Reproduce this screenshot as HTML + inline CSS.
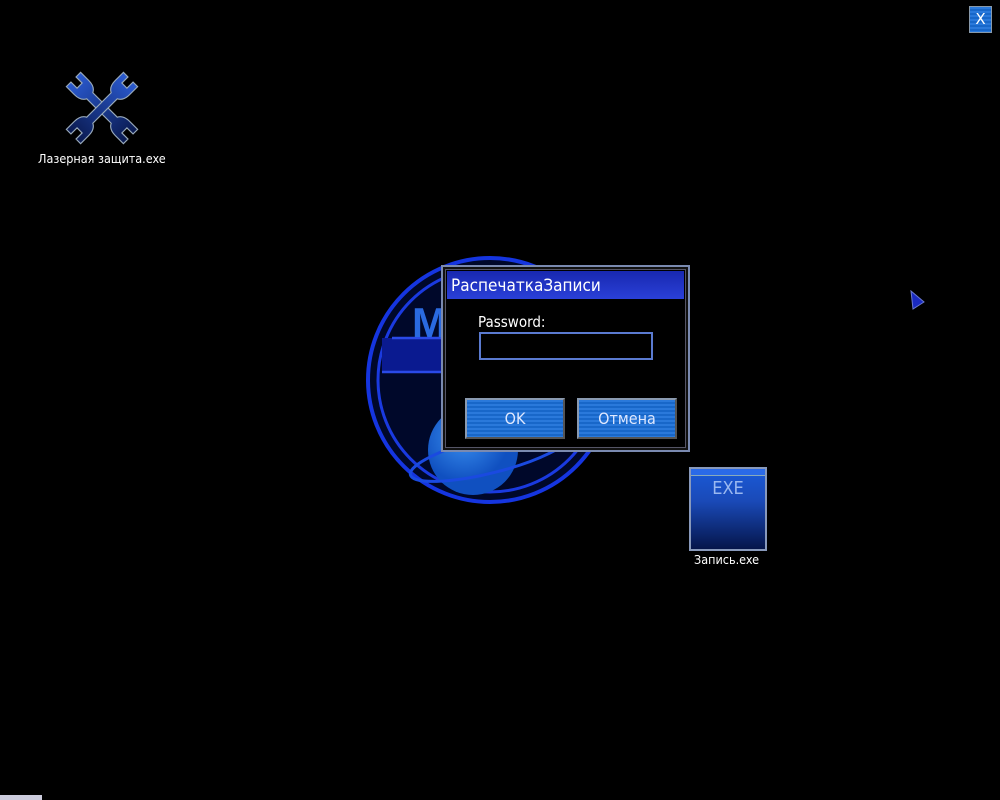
<!DOCTYPE html>
<html><head><meta charset="utf-8"><style>
body{margin:0;width:1000px;height:800px;background:#000;position:relative;overflow:hidden;font-family:"DejaVu Sans","Liberation Sans",sans-serif;color:#fff}
.stripe{background-image:repeating-linear-gradient(180deg,rgba(255,255,255,.07) 0 2px,rgba(0,0,0,.07) 2px 4px)}
.btn{position:absolute;border:2px solid #8a9ab0;border-right-color:#555;border-bottom-color:#555;background-color:#1a6fd8;font-size:16px;text-align:center;line-height:37px;color:#dfe8ff;font-family:"DejaVu Sans Condensed","DejaVu Sans",sans-serif}
</style></head><body>
<div class="stripe" style="position:absolute;left:969px;top:6px;width:21px;height:25px;background-color:#1a6fd8;border:1px solid #8899aa;font-size:15px;text-align:center;line-height:25px">X</div>

<svg style="position:absolute;left:60px;top:66px" width="84" height="84" viewBox="-42 -42 84 84">
<defs><linearGradient id="g" x1="0" y1="0" x2="0" y2="1"><stop offset="0" stop-color="#2a5ad0"/><stop offset="1" stop-color="#0a1a50"/></linearGradient></defs>
<g fill="url(#g)" stroke="#9ab" stroke-width="1.6">
<path transform="rotate(-45) scale(0.72)" d="M-14 -56 L-14 -40 Q-14 -28 -6 -24 L-6 24 Q-14 28 -14 40 L-14 56 L-5 56 L-5 44 L5 44 L5 56 L14 56 L14 40 Q14 28 6 24 L6 -24 Q14 -28 14 -40 L14 -56 L5 -56 L5 -44 L-5 -44 L-5 -56 Z"/>
<path transform="rotate(45) scale(0.72)" d="M-14 -56 L-14 -40 Q-14 -28 -6 -24 L-6 24 Q-14 28 -14 40 L-14 56 L-5 56 L-5 44 L5 44 L5 56 L14 56 L14 40 Q14 28 6 24 L6 -24 Q14 -28 14 -40 L14 -56 L5 -56 L5 -44 L-5 -44 L-5 -56 Z"/>
</g></svg>
<div style="position:absolute;left:38px;top:151px;font-size:12.5px;font-family:'DejaVu Sans Condensed','DejaVu Sans',sans-serif">Лазерная защита.exe</div>

<svg style="position:absolute;left:360px;top:245px" width="270" height="270" viewBox="0 0 270 270">
<defs><radialGradient id="p" cx=".4" cy=".35"><stop offset="0" stop-color="#3a90f0"/><stop offset="1" stop-color="#1050c0"/></radialGradient></defs>
<circle cx="130" cy="135" r="122" fill="#00082a" stroke="#1535e0" stroke-width="4"/>
<circle cx="130" cy="135" r="112" fill="none" stroke="#1a3ae0" stroke-width="3"/>
<rect x="22" y="93" width="220" height="34" fill="#0a1a90"/>
<path d="M32 93 L240 93 M22 127 L240 127" stroke="#2a4ae8" stroke-width="2.5"/>
<text x="52" y="92" font-size="42" font-weight="bold" fill="#2a6ae0" font-family="Liberation Sans">M</text>
<circle cx="113" cy="205" r="45" fill="url(#p)"/>
<ellipse cx="130" cy="210" rx="82" ry="18" fill="none" stroke="#1a4ae0" stroke-width="3" transform="rotate(-14 130 210)"/>
</svg>

<div style="position:absolute;left:441px;top:265px;width:245px;height:183px;background:#000;border:2px solid #7a8ab0;box-shadow:inset 0 0 0 2px #111, inset 0 0 0 3px #556">
<div style="position:absolute;left:4px;top:4px;right:4px;height:28px;background:linear-gradient(180deg,#1828b0,#2a40d8);font-size:17px;line-height:31px;padding-left:4px;font-family:'DejaVu Sans Condensed','DejaVu Sans',sans-serif">РаспечаткаЗаписи</div>
<div style="position:absolute;left:35px;top:46px;font-size:15px;font-family:'DejaVu Sans Condensed','DejaVu Sans',sans-serif">Password:</div>
<div style="position:absolute;left:36px;top:65px;width:170px;height:24px;border:2px solid #5a7ad0"></div>
</div>
<div class="btn stripe" style="left:465px;top:398px;width:96px;height:37px">OK</div>
<div class="btn stripe" style="left:577px;top:398px;width:96px;height:37px">Отмена</div>

<div style="position:absolute;left:689px;top:467px;width:74px;height:80px;border:2px solid #8899bb;background:linear-gradient(180deg,#1a5ad8 0%,#1a4ab8 40%,#05154a 100%)">
<div style="height:6px;background:#2a6ae8;border-bottom:1px solid #8ab"></div>
<div style="text-align:center;font-size:18px;color:#9ab8f0;margin-top:2px;font-family:'DejaVu Sans Condensed','DejaVu Sans',sans-serif">EXE</div>
</div>
<div style="position:absolute;left:694px;top:552px;font-size:12.5px;font-family:'DejaVu Sans Condensed','DejaVu Sans',sans-serif">Запись.exe</div>

<svg style="position:absolute;left:910px;top:290px" width="16" height="22"><path d="M1 1 L14 12 L3 19 Z" fill="#1a2ac0" stroke="#6a7ad0"/></svg>
<div style="position:absolute;left:0;top:795px;width:42px;height:5px;background:#ccd;"></div>
</body></html>
